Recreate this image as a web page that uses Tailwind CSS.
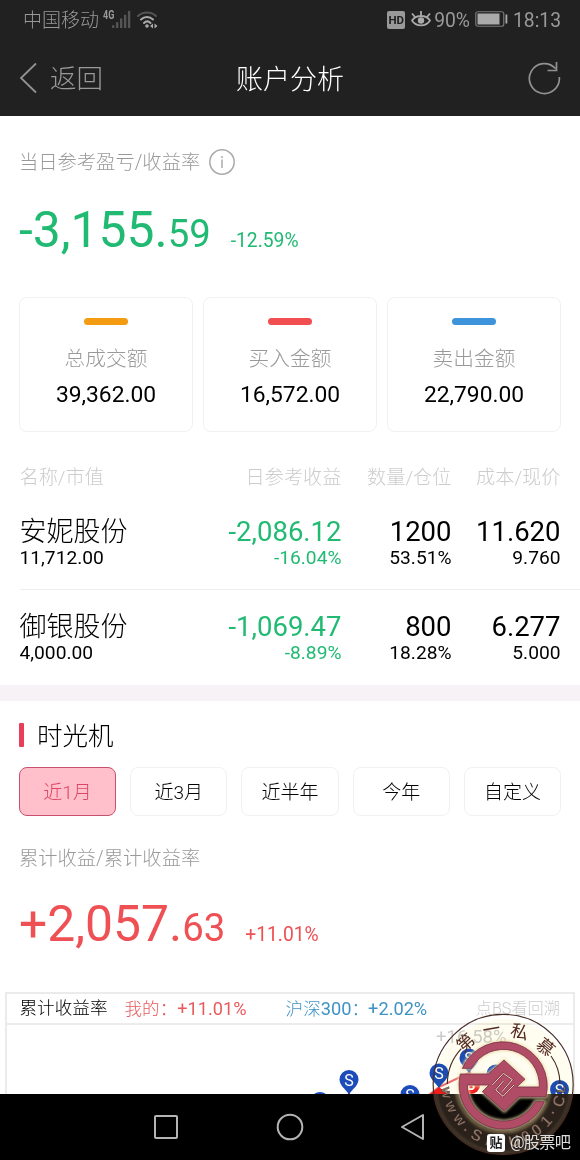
<!DOCTYPE html>
<html lang="zh-CN">
<head>
  <meta charset="UTF-8" />
  <meta name="viewport" content="width=device-width, initial-scale=1.0" />
  <title>账户分析</title>
  <script src="https://cdn.jsdelivr.net/npm/@tailwindcss/browser@4"></script>
</head>
<body class="bg-white">
<div class="relative w-[580px] h-[1160px] overflow-hidden flex flex-col font-light text-black font-['Roboto','Noto_Sans_CJK_SC',sans-serif]">

  <!-- Status bar + title -->
  <header class="h-[116px] shrink-0 bg-[#212121] text-[#999]">
    <div class="h-10 pt-px flex items-center pl-[23px] pr-[19px] font-normal">
      <span class="text-[19px] leading-none font-light">中国移动</span>
      <span class="text-[12px] leading-none font-bold ml-[4px] -mt-[12px] scale-x-75 origin-left">4G</span>
      <svg class="-ml-[6px] -mt-[2px]" width="19" height="17" viewBox="0 0 20 18">
        <g fill="#555"><path d="M0 15h2.500v3H0zM4.200 12h2.500v6H4.200zM8.400 8h2.500v10H8.400zM12.600 4h2.500v14h-2.500zM16.800 0h2.500v18h-2.500z" /></g>
      </svg>
      <svg class="ml-[6px] -mt-[2px]" width="22" height="18" viewBox="0 0 22 18" fill="none" stroke-linecap="round">
        <path d="M1 5C6 .200 14 .200 19 5" stroke="#555" stroke-width="2" />
        <path d="M4 8.500c3.500-3.500 8.500-3.500 12 0M7 12c2-2 4.500-2 6.500 0" stroke="#aaa" stroke-width="2" />
        <circle cx="10" cy="15" r="1.800" fill="#aaa" />
        <path d="M16 12.500v5l-3-2.500zM17.500 12.500v5l3-2.500z" fill="#aaa" />
      </svg>
      <div class="ml-auto flex items-center">
        <span class="w-[18px] h-[18px] rounded-[2px] bg-[#999] text-[#212121] text-[11.500px] leading-[18px] font-bold text-center">HD</span>
        <svg class="ml-[6px] -mt-[2px]" width="20" height="18" viewBox="0 0 20 18" fill="none" stroke="#aaa" stroke-width="1.800">
          <path d="M1 10.500C5 4.500 15 4.500 19 10.500 15 17 5 17 1 10.500zM10 5.500V1M4 7 1 3.500M16 7l3-3.500" />
          <circle cx="10" cy="10.500" r="3.200" fill="#aaa" stroke="none" />
        </svg>
        <span class="ml-[3px] text-[19.300px] leading-none">90%</span>
        <svg class="ml-[5px] -mt-[2px]" width="33" height="16" viewBox="0 0 33 16">
          <rect x=".750" y=".750" width="28" height="14.500" rx="2" fill="none" stroke="#777" stroke-width="1.200" />
          <rect x="2.500" y="2.500" width="22" height="11" fill="#aaa" />
          <path d="M30.500 3.500h1.800v9h-1.800z" fill="#aaa" />
        </svg>
        <span class="ml-[5px] text-[19.300px] leading-none">18:13</span>
      </div>
    </div>
    <div class="relative h-[76px] flex items-center justify-between pl-[19px] pr-[19px]">
      <div class="flex items-center gap-[13px] text-[26.500px] leading-none">
        <svg width="18" height="32" viewBox="0 0 18 32" fill="none" stroke="#929292" stroke-width="1.800"><path d="M17 1.500 2 16l15 14.500" /></svg>
        <span class="mt-[3px]">返回</span>
      </div>
      <h1 class="absolute inset-x-0 pt-[4px] text-center text-[27px] leading-none text-white">账户分析</h1>
      <svg width="34" height="34" viewBox="0 0 34 34" fill="none" stroke="#929292" stroke-width="1.700">
        <path d="M32.300 16A15 15 0 1 1 28.500 7.500M29.500 1v8.500h-9" />
      </svg>
    </div>
  </header>

  <!-- Today's profit -->
  <section class="px-[19px]">
    <div class="h-[30px] mt-[32px] flex items-center text-[19.300px] leading-none text-[#999]">
      当日参考盈亏/收益率
      <svg class="ml-[8px] -mt-[3px]" width="28" height="28" viewBox="0 0 28 28" fill="none" stroke="#aaa" stroke-width="1.500">
        <circle cx="14" cy="14" r="12.200" /><path d="M14 11.500v8.500M14 8v2" />
      </svg>
    </div>
    <div class="h-[60px] mt-[22px] flex items-baseline font-normal leading-[60px] text-[#21ba73]">
      <span class="text-[49.800px]">-3,155.</span><span class="text-[38.300px]">59</span>
      <span class="text-[19.300px] ml-[20px]">-12.59%</span>
    </div>
  </section>

  <!-- Totals -->
  <section class="mt-[37px] mx-[19px] grid grid-cols-3 gap-[10px] text-center">
    <div class="h-[135px] rounded-lg border-[1.500px] border-[#f1f1f1] flex flex-col items-center">
      <i class="mt-[20px] w-[44px] h-[7px] rounded-full bg-[#f39c12]"></i>
      <span class="mt-[21px] text-[20.700px] leading-[26px] text-[#999]">总成交额</span>
      <span class="mt-[10px] text-[22.800px] leading-[26px] font-normal">39,362.00</span>
    </div>
    <div class="h-[135px] rounded-lg border-[1.500px] border-[#f1f1f1] flex flex-col items-center">
      <i class="mt-[20px] w-[44px] h-[7px] rounded-full bg-[#f04e50]"></i>
      <span class="mt-[21px] text-[20.700px] leading-[26px] text-[#999]">买入金额</span>
      <span class="mt-[10px] text-[22.800px] leading-[26px] font-normal">16,572.00</span>
    </div>
    <div class="h-[135px] rounded-lg border-[1.500px] border-[#f1f1f1] flex flex-col items-center">
      <i class="mt-[20px] w-[44px] h-[7px] rounded-full bg-[#3d94db]"></i>
      <span class="mt-[21px] text-[20.700px] leading-[26px] text-[#999]">卖出金额</span>
      <span class="mt-[10px] text-[22.800px] leading-[26px] font-normal">22,790.00</span>
    </div>
  </section>

  <!-- Holdings -->
  <section class="ml-[19.500px] mt-[33px] font-normal">
    <div class="grid grid-cols-[150px_172px_110px_109px] h-[26px] text-[19.200px] leading-[26px] text-[#ccc] font-light text-right">
      <span class="text-left">名称/市值</span><span>日参考收益</span><span>数量/仓位</span><span>成本/现价</span>
    </div>
    <div class="mt-[24px] h-[75px] grid grid-cols-[150px_172px_110px_109px] border-b-[1.500px] border-[#eee] text-right">
      <div class="text-left"><p class="text-[27px] leading-[34px] font-light">安妮股份</p><p class="text-[19.200px] leading-[18px]">11,712.00</p></div>
      <div class="text-[#21ba73]"><p class="text-[27.500px] leading-[34px]">-2,086.12</p><p class="text-[19.200px] leading-[18px]">-16.04%</p></div>
      <div><p class="text-[27.500px] leading-[34px]">1200</p><p class="text-[19.200px] leading-[18px]">53.51%</p></div>
      <div><p class="text-[27.500px] leading-[34px]">11.620</p><p class="text-[19.200px] leading-[18px]">9.760</p></div>
    </div>
    <div class="pt-[20px] h-[95px] grid grid-cols-[150px_172px_110px_109px] text-right">
      <div class="text-left"><p class="text-[27px] leading-[34px] font-light">御银股份</p><p class="text-[19.200px] leading-[18px]">4,000.00</p></div>
      <div class="text-[#21ba73]"><p class="text-[27.500px] leading-[34px]">-1,069.47</p><p class="text-[19.200px] leading-[18px]">-8.89%</p></div>
      <div><p class="text-[27.500px] leading-[34px]">800</p><p class="text-[19.200px] leading-[18px]">18.28%</p></div>
      <div><p class="text-[27.500px] leading-[34px]">6.277</p><p class="text-[19.200px] leading-[18px]">5.000</p></div>
    </div>
  </section>

  <div class="h-4 shrink-0 bg-[#f6f2f6]"></div>

  <!-- Time machine -->
  <section class="px-[19px]">
    <div class="mt-[19px] h-[30px] flex items-center gap-[13px] text-[25.500px] leading-none">
      <i class="w-[5px] h-6 rounded-[1px] bg-[#e83e5a]"></i><span class="mt-[3px]">时光机</span>
    </div>
    <div class="mt-[17px] grid grid-cols-5 gap-[14px] text-center text-[19px] leading-[49px]">
      <span class="h-[49px] rounded-lg border border-[#c8506c] bg-[#ffc0cb] text-[#dc4664]">近1月</span>
      <span class="h-[49px] rounded-lg border-[1.500px] border-[#f1f1f1]">近3月</span>
      <span class="h-[49px] rounded-lg border-[1.500px] border-[#f1f1f1]">近半年</span>
      <span class="h-[49px] rounded-lg border-[1.500px] border-[#f1f1f1]">今年</span>
      <span class="h-[49px] rounded-lg border-[1.500px] border-[#f1f1f1]">自定义</span>
    </div>
    <p class="mt-[30px] text-[19.300px] leading-[26px] text-[#999]">累计收益/累计收益率</p>
    <div class="mt-[22px] h-[60px] flex items-baseline font-normal leading-[60px] text-[#ee5054]">
      <span class="text-[49.800px]">+2,057.</span><span class="text-[38.300px]">63</span>
      <span class="text-[19.300px] ml-[20px]">+11.01%</span>
    </div>
  </section>

  <!-- Return chart -->
  <section class="mt-[38px] mx-[5px] h-[102px] shrink-0 overflow-hidden border-2 border-b-0 border-[#ebebeb]">
    <div class="h-[31px] border-b-2 border-[#ececec] flex items-center pl-[12.500px] pr-[13px] pt-px text-[17.600px] leading-none">
      <span>累计收益率</span>
      <span class="ml-[17px] text-[#e85a5e] whitespace-pre">我的：<b class="font-normal text-[18.200px]">+11.01%</b></span>
      <span class="ml-[39px] text-[#3f93c4] whitespace-pre">沪深<b class="font-normal text-[18.200px]">300</b>：<b class="font-normal text-[18.200px] -ml-[1px]">+2.02%</b></span>
      <span class="ml-auto text-[#ccc] text-[16.200px]">点BS看回溯</span>
    </div>
    <svg width="566" height="69" viewBox="7 1025 566 69">
      <defs>
        <g id="pin">
          <path d="M0 15C-3 10-9.500 6-9.500 0a9.500 9.500 0 0 1 19 0C9.500 6 3 10 0 15z" fill="#1c4cba" />
          <text y="6" font-size="16" text-anchor="middle" fill="#fff" font-weight="400">S</text>
        </g>
      </defs>
      <text x="436" y="1043" font-size="18.500" fill="#ccc" font-weight="400">+16.58%</text>
      <path d="M425 1098 439 1087l32-15" fill="none" stroke="#ef6c72" stroke-width="2" />
      <path d="m429 1095 10-8 10 8z" fill="#f21c1c" />
      <circle cx="471" cy="1085" r="9" fill="#f01f24" />
      <text x="471" y="1090" font-size="14" text-anchor="middle" fill="#fff" font-weight="700">B</text>
      <path d="M349 1092v3" stroke="#f21c1c" stroke-width="2" />
      <use href="#pin" x="349" y="1079.500" />
      <use href="#pin" x="320" y="1101.500" />
      <use href="#pin" x="410" y="1094.500" />
      <use href="#pin" x="439" y="1073" />
      <use href="#pin" x="469" y="1058" />
      <use href="#pin" x="496" y="1074" />
      <use href="#pin" x="559.500" y="1089.500" />
    </svg>
  </section>

  <!-- System navigation -->
  <nav class="h-[66px] shrink-0 bg-black">
    <svg width="580" height="66" viewBox="0 0 580 66" fill="none" stroke="#b4b4b4" stroke-width="2" stroke-linejoin="round">
      <rect x="155" y="22" width="22" height="22" rx="1" />
      <circle cx="290" cy="33" r="12.300" />
      <path d="m402 33 21-12v24z" />
    </svg>
  </nav>

  <!-- Round seal over the corner -->
  <svg class="absolute left-[425px] top-[1005px] mix-blend-multiply" width="155" height="155" viewBox="0 0 465 465">
    <path d="M24 267a211 211 0 1 1 421 0z" fill="#fffdf0" />
  </svg>
  <svg class="absolute left-[425px] top-[1005px]" width="155" height="155" viewBox="0 0 465 465">
    <defs>
      <clipPath id="lower"><path d="M0 267h465v198H0z" /></clipPath>
      <filter id="glow" x="-20%" y="-20%" width="140%" height="140%"><feGaussianBlur stdDeviation="4" /></filter>
      <path id="emblem" d="M112 190A133 133 0 0 1 363 275H282l-44 43-66-58 20-20h-65A108 108 0 0 0 331 290h27A133 133 0 0 1 106 207h84l47-42 63 58-25 23h68A108 108 0 0 0 140 190z" />
    </defs>
    <g clip-path="url(#lower)" fill="none">
      <circle cx="234.500" cy="238" r="176" stroke="#2a211b" stroke-width="68" />
      <circle cx="234.500" cy="238" r="204" stroke="#5a4a38" stroke-width="5" filter="url(#glow)" />
      <circle cx="234.500" cy="240" r="142" stroke="#85704a" stroke-width="6" filter="url(#glow)" />
    </g>
    <circle cx="234.500" cy="238" r="210" fill="none" stroke="#482c25" stroke-width="3.500" />
    <path d="M67 237c0-42 16-78 42-106M405 237c0-38-11-62-27-84" fill="none" stroke="#482c25" stroke-width="3.500" />
    <use href="#emblem" fill="none" stroke="#eddba6" stroke-width="8" filter="url(#glow)" />
    <use href="#emblem" fill="#b04c66" stroke="#79334a" stroke-width="2.500" />
    <!-- interlocking hooks in the middle of the coin -->
    <path d="m202 240 33-35 27 19-31 36M236 227l-24 28 22 19 33-34" fill="none" stroke="#7d3047" stroke-width="6" />
    <path d="m202 240 33-35 27 19-31 36M236 227l-24 28 22 19 33-34" fill="none" stroke="#f3dcc4" stroke-width="3" />
    <g class="font-normal" font-size="53" fill="#552a20" text-anchor="middle">
      <text transform="translate(122 113) rotate(-42)" y="19">第</text>
      <text transform="translate(199 73) rotate(-10)" y="19">一</text>
      <text transform="translate(284 80) rotate(14)" y="19">私</text>
      <text transform="translate(362 127) rotate(40)" y="19">慕</text>
    </g>
    <g class="font-['Liberation_Sans'] font-bold" font-size="48" fill="#8a7364" stroke="#2a1a14" stroke-width="1" text-anchor="middle">
      <text transform="translate(61 264) rotate(82)" y="10" font-size="44">w</text>
      <text transform="translate(75 307) rotate(66)" y="10" font-size="44">w</text>
      <text transform="translate(101 347) rotate(50)" y="10" font-size="44">w</text>
      <text transform="translate(122 373) rotate(38)" y="6">.</text>
      <text transform="translate(155 391) rotate(26)" y="16">S</text>
      <text transform="translate(188 406) rotate(14)" y="16">I</text>
      <text transform="translate(223 411) rotate(3)" y="16">M</text>
      <text transform="translate(268 408) rotate(-12)" y="16">U</text>
      <text transform="translate(303 395) rotate(-24)" y="16">0</text>
      <text transform="translate(335 375) rotate(-36)" y="16">0</text>
      <text transform="translate(364 348) rotate(-48)" y="16">1</text>
      <text transform="translate(382 322) rotate(-58)" y="6">.</text>
      <text transform="translate(402 289) rotate(-70)" y="16">C</text>
      <text transform="translate(408 253) rotate(-82)" y="12" font-size="36">L</text>
    </g>
  </svg>

  <!-- Post source -->
  <div class="absolute left-[487px] top-[1133px] flex items-center gap-[5px] text-[16.200px] leading-[20px] text-[#ddd]">
    <span class="w-[18px] h-[18px] rounded-[3px] bg-white text-[#222] text-[13px] leading-[17px] font-bold text-center">贴</span>
    <span class="whitespace-nowrap tracking-[-0.700px] font-normal">@股票吧</span>
  </div>
</div>
</body>
</html>
